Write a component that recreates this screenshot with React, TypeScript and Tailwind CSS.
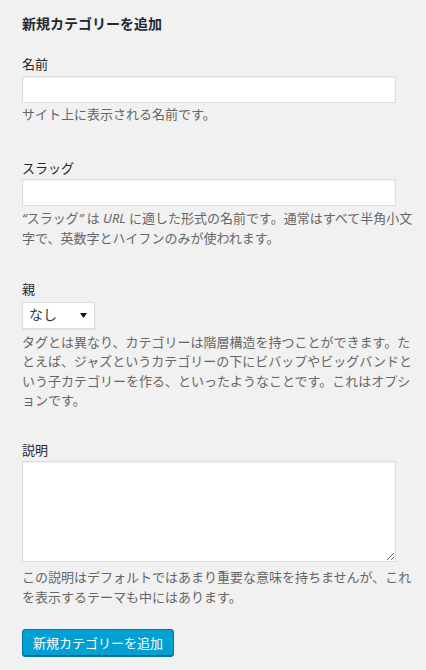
import React from "react";

export default function App() {
  return (
    <div className="min-h-screen bg-[#f1f1f1] font-['Noto_Sans','Noto_Sans_CJK_JP',sans-serif] text-[13px] text-[#23282d]">
      <div className="pl-[22px] pt-[14px] w-[420px]">
        <h2 className="m-0 text-[14px] font-bold leading-[20px]">新規カテゴリーを追加</h2>

        <div className="mt-[20px]">
          <label className="block leading-[20px]">名前</label>
          <input
            type="text"
            className="mt-[2px] block w-[374px] h-[27px] bg-white border border-[#dddddd] shadow-[inset_0_1px_2px_rgba(0,0,0,0.07)] outline-none px-[5px]"
          />
          <p className="mt-[2px] leading-[19.5px] text-[#666666] whitespace-nowrap">
            サイト上に表示される名前です。
          </p>
        </div>

        <div className="mt-[33px]">
          <label className="block leading-[20px]">スラッグ</label>
          <input
            type="text"
            className="mt-[1.5px] block w-[374px] h-[27px] bg-white border border-[#dddddd] shadow-[inset_0_1px_2px_rgba(0,0,0,0.07)] outline-none px-[5px]"
          />
          <p className="mt-[3px] leading-[19.5px] text-[#666666] whitespace-nowrap">
            <span className="italic">“</span>スラッグ<span className="italic">”</span> は{" "}
            <span className="italic">URL</span> に適した形式の名前です。通常はすべて半角小文
            <br />
            字で、英数字とハイフンのみが使われます。
          </p>
        </div>

        <div className="mt-[30.5px]">
          <label className="block leading-[20px]">親</label>
          <div className="mt-[3px] flex items-center justify-between w-[73px] h-[27px] bg-white border border-[#dddddd] shadow-[0_1px_2px_rgba(0,0,0,0.05)] pl-[6px] pr-[7px]">
            <span className="text-[14px] leading-[20px] text-[#32373c]">なし</span>
            <svg width="7" height="5" viewBox="0 0 7 5" className="mt-[1px]">
              <path d="M0 0 L7 0 L3.5 5 Z" fill="#111111" />
            </svg>
          </div>
          <p className="mt-[4px] leading-[19.5px] text-[#666666] whitespace-nowrap">
            タグとは異なり、カテゴリーは階層構造を持つことができます。た
            <br />
            とえば、ジャズというカテゴリーの下にビバップやビッグバンドと
            <br />
            いう子カテゴリーを作る、といったようなことです。これはオプシ
            <br />
            ョンです。
          </p>
        </div>

        <div className="mt-[29px]">
          <label className="block leading-[20px]">説明</label>
          <textarea
            className="mt-[1.5px] block w-[374px] h-[101px] bg-white border border-[#dddddd] shadow-[inset_0_1px_2px_rgba(0,0,0,0.07)] outline-none resize-y"
          />
          <p className="mt-[6px] leading-[19.5px] text-[#666666] whitespace-nowrap">
            この説明はデフォルトではあまり重要な意味を持ちませんが、これ
            <br />
            を表示するテーマも中にはあります。
          </p>
        </div>

        <button
          type="button"
          className="mt-[22px] block h-[28px] px-[10px] text-[13px] leading-[26px] text-white bg-[#00a0d2] border border-[#0073aa] rounded-[3px] shadow-[inset_0_-1px_0_#006799]"
        >
          新規カテゴリーを追加
        </button>
      </div>
    </div>
  );
}
